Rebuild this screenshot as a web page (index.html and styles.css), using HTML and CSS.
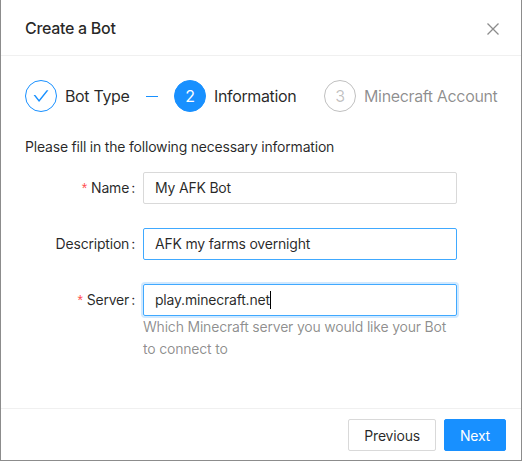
FILE: index.html
```html
<!DOCTYPE html>
<html>
<head>
<meta charset="utf-8">
<link rel="stylesheet" href="styles.css">
</head>
<body>
<div class="modal">
  <div class="modal-header">
    <div class="modal-title">Create a Bot</div>
    <button class="modal-close" aria-label="Close">
      <svg width="12" height="12" viewBox="0 0 12 12"><path d="M0.5 0.5 L11.5 11.5 M11.5 0.5 L0.5 11.5" stroke="#8c8c8c" stroke-width="1.3" fill="none"/></svg>
    </button>
  </div>
  <div class="modal-body">
    <div class="steps">
      <div class="step step-done">
        <div class="step-icon">
          <svg width="16" height="16" viewBox="64 64 896 896"><path fill="#1890ff" d="M912 190h-69.9c-9.8 0-19.1 4.5-25.1 12.2L404.7 724.5 207 474a32 32 0 00-25.1-12.2H112c-6.7 0-10.4 7.7-6.3 12.9l273.9 347c12.8 16.2 37.4 16.2 50.3 0l488.4-618.9c4.1-5.1.4-12.8-6.3-12.8z"/></svg>
        </div>
        <div class="step-title">Bot Type<span class="step-tail"></span></div>
      </div>
      <div class="step step-active">
        <div class="step-icon">2</div>
        <div class="step-title">Information</div>
      </div>
      <div class="step step-wait">
        <div class="step-icon">3</div>
        <div class="step-title">Minecraft Account</div>
      </div>
    </div>
    <p class="intro">Please fill in the following necessary information</p>
    <div class="form">
      <div class="form-row">
        <div class="form-label"><span class="req">*</span>Name<span class="colon">:</span></div>
        <div class="form-control">
          <div class="input">My AFK Bot</div>
        </div>
      </div>
      <div class="form-row">
        <div class="form-label">Description<span class="colon">:</span></div>
        <div class="form-control">
          <div class="input input-hover">AFK my farms overnight</div>
        </div>
      </div>
      <div class="form-row">
        <div class="form-label"><span class="req">*</span>Server<span class="colon">:</span></div>
        <div class="form-control">
          <div class="input input-focus">play.minecraft.net<span class="caret"></span></div>
          <div class="help">Which Minecraft server you would like your Bot<br>to connect to</div>
        </div>
      </div>
    </div>
  </div>
  <div class="modal-footer">
    <button class="btn">Previous</button>
    <button class="btn btn-primary">Next</button>
  </div>
</div>
</body>
</html>
```
FILE: styles.css
```css
* { box-sizing: border-box; }
html, body { margin: 0; padding: 0; background: #fff; }
body {
  font-family: Inter, "Noto Sans", sans-serif;
  font-size: 14px;
  letter-spacing: -0.2px;
  color: rgba(0,0,0,0.85);
  width: 522px;
  height: 462px;
  overflow: hidden;
}
.modal {
  width: 522px;
  height: 461px;
  border-left: 1px solid #8c8c8c;
  border-right: 1px solid #8c8c8c;
  border-bottom: 1px solid #8c8c8c;
  background: #fff;
  display: flex;
  flex-direction: column;
}
.modal-header {
  position: relative;
  padding: 17px 24px 16px;
  border-bottom: 1px solid #f0f0f0;
}
.modal-title {
  font-size: 16px;
  font-weight: 500;
  line-height: 22px;
  letter-spacing: -0.3px;
  color: rgba(0,0,0,0.85);
}
.modal-close {
  position: absolute;
  top: 0;
  right: 0;
  width: 56px;
  height: 58px;
  border: 0;
  background: none;
  padding: 0;
  display: flex;
  align-items: center;
  justify-content: center;
}
.modal-body {
  padding: 24px;
  flex: 1;
}
.steps {
  display: flex;
  align-items: center;
  height: 32px;
}
.step {
  display: flex;
  align-items: center;
  margin-right: 16px;
  white-space: nowrap;
  flex: none;
}
.step-done { width: 133px; }
.step-active { width: 134px; }
.step-icon {
  width: 32px;
  height: 32px;
  border-radius: 50%;
  border: 1px solid #1890ff;
  display: flex;
  align-items: center;
  justify-content: center;
  font-size: 16px;
  flex: none;
  margin-right: 8px;
}
.step-active .step-icon { background: #1890ff; color: #fff; }
.step-wait .step-icon { border-color: rgba(0,0,0,0.25); color: rgba(0,0,0,0.25); }
.step-title {
  font-size: 16px;
  letter-spacing: -0.35px;
  line-height: 32px;
  display: flex;
  align-items: center;
  flex: 1;
}
.step-wait .step-title { color: rgba(0,0,0,0.45); }
.step-tail {
  flex: 1;
  height: 1px;
  background: #1890ff;
  margin-left: 17px;
}
.intro {
  margin: 24px 0 14px;
  line-height: 22px;
}
.form-row {
  display: grid;
  grid-template-columns: 118px 314px;
  margin-bottom: 24px;
}
.form-label {
  text-align: right;
  line-height: 32px;
  height: 32px;
  white-space: nowrap;
}
.req {
  color: #ff4d4f;
  font-family: SimSun, "Liberation Sans", sans-serif;
  margin-right: 4px;
}
.colon { margin: 0 8px 0 2px; }
.input {
  height: 32px;
  border: 1px solid #d9d9d9;
  border-radius: 2px;
  padding: 4px 11px;
  line-height: 22px;
  color: rgba(0,0,0,0.85);
}
.input-hover { border-color: #40a9ff; }
.input-focus {
  border-color: #40a9ff;
  box-shadow: 0 0 0 2px rgba(24,144,255,0.2);
}
.caret {
  display: inline-block;
  width: 1px;
  height: 18px;
  background: #000;
  vertical-align: -4px;
}
.help {
  color: rgba(0,0,0,0.45);
  line-height: 22px;
}
.modal-footer {
  border-top: 1px solid #f0f0f0;
  padding: 10px 15px 10px 16px;
  display: flex;
  justify-content: flex-end;
  gap: 8px;
}
.btn {
  height: 32px;
  padding: 4px 15px;
  border: 1px solid #d9d9d9;
  border-radius: 2px;
  background: #fff;
  font-family: Inter, "Noto Sans", sans-serif;
  font-size: 14px;
  letter-spacing: -0.2px;
  color: rgba(0,0,0,0.85);
}
.btn-primary {
  background: #1890ff;
  border-color: #1890ff;
  color: #fff;
}
```
